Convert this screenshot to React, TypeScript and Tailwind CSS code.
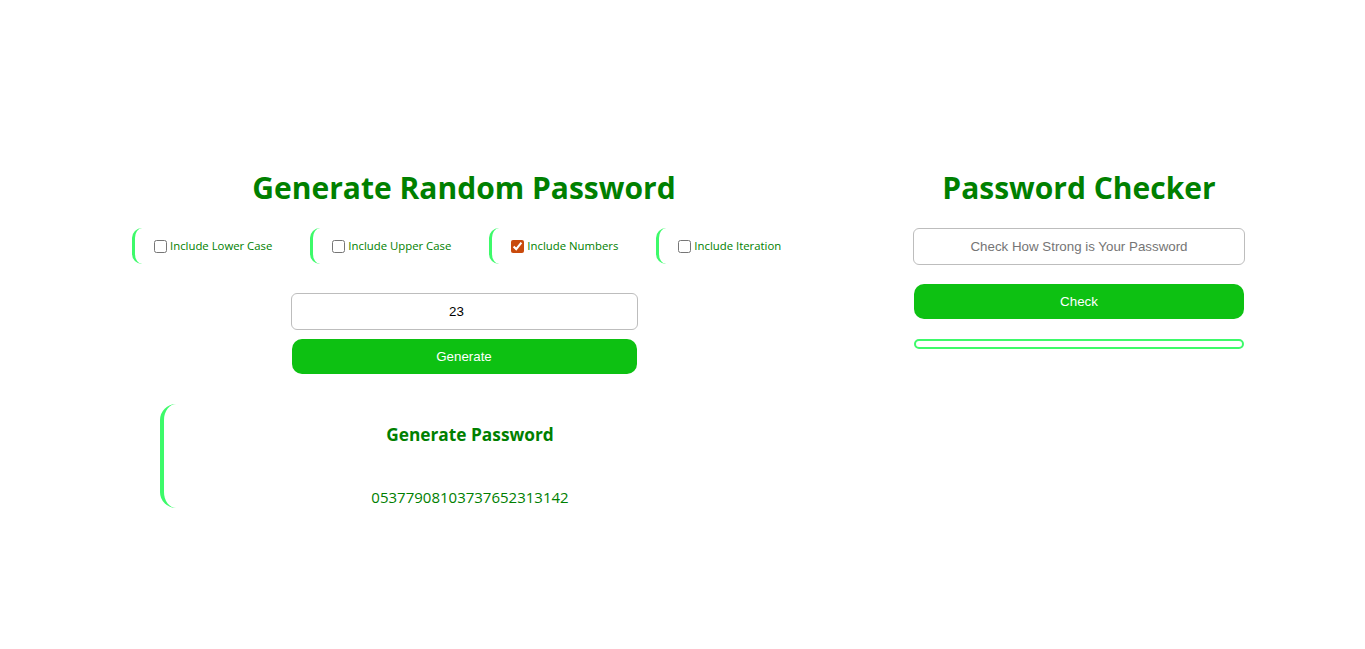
import React, { useState } from 'react';

const options = [
  { id: 'lower', label: 'Include Lower Case' },
  { id: 'upper', label: 'Include Upper Case' },
  { id: 'numbers', label: 'Include Numbers' },
  { id: 'iteration', label: 'Include Iteration' },
];

const App = () => {
  const [checked, setChecked] = useState<Record<string, boolean>>({ numbers: true });
  const [length, setLength] = useState('23');
  const [check, setCheck] = useState('');

  return (
    <div className="min-h-[649px] w-full bg-white flex pt-[168px] font-['Open_Sans',sans-serif]">
      <div className="ml-[119px] w-[690px] shrink-0 flex flex-col items-center">
        <h1 className="text-[30px] leading-[40px] font-bold text-[#008000]">Generate Random Password</h1>

        <div className="mt-[20px] flex self-start ml-[13px]">
          {options.map((o) => (
            <label
              key={o.id}
              className="h-[36px] shrink-0 whitespace-nowrap flex items-center pl-[19px] pr-[38px] border-l-[3px] border-[#3dfa6a] rounded-[10px] text-[11.35px] text-[#008000]"
            >
              <input
                type="checkbox"
                checked={!!checked[o.id]}
                onChange={() => setChecked({ ...checked, [o.id]: !checked[o.id] })}
                className="w-[13px] h-[13px] m-0 mr-[3px] accent-[#c94a0c]"
              />
              {o.label}
            </label>
          ))}
        </div>

        <input
          type="number"
          value={length}
          onChange={(e) => setLength(e.target.value)}
          className="mt-[29px] w-[347px] h-[37px] border-[1.5px] border-[#bdbdbd] rounded-[6px] text-center text-[13.333px] text-black font-['Liberation_Sans',Arial,sans-serif] outline-none"
        />
        <button className="mt-[9px] w-[345px] h-[35px] bg-[#0dc112] rounded-[10px] text-white text-[13.333px] font-['Liberation_Sans',Arial,sans-serif]">
          Generate
        </button>

        <div className="mt-[30px] self-start ml-[41px] w-[616px] h-[104px] border-l-4 border-[#3dfa6a] rounded-[16px] flex flex-col items-center">
          <h3 className="mt-[17px] text-[17.3px] leading-[28px] font-bold text-[#008000]">Generate Password</h3>
          <p className="mt-[38px] text-[15px] leading-[20px] text-[#008000]">05377908103737652313142</p>
        </div>
      </div>

      <div className="ml-[104px] w-[332px] shrink-0 flex flex-col items-center">
        <h1 className="text-[30px] leading-[40px] font-bold text-[#008000]">Password Checker</h1>
        <input
          value={check}
          onChange={(e) => setCheck(e.target.value)}
          placeholder="Check How Strong is Your Password"
          className="mt-[20px] w-[332px] h-[37px] border-[1.5px] border-[#bdbdbd] rounded-[6px] text-center text-[13.333px] text-black placeholder:text-[#757575] font-['Liberation_Sans',Arial,sans-serif] outline-none"
        />
        <button className="mt-[19px] w-[330px] h-[35px] bg-[#0dc112] rounded-[10px] text-white text-[13.333px] font-['Liberation_Sans',Arial,sans-serif]">
          Check
        </button>
        <div className="mt-[20px] w-[330px] h-[10px] border-2 border-[#3dfa6a] rounded-[5px]"></div>
      </div>
    </div>
  );
};

export default App;
